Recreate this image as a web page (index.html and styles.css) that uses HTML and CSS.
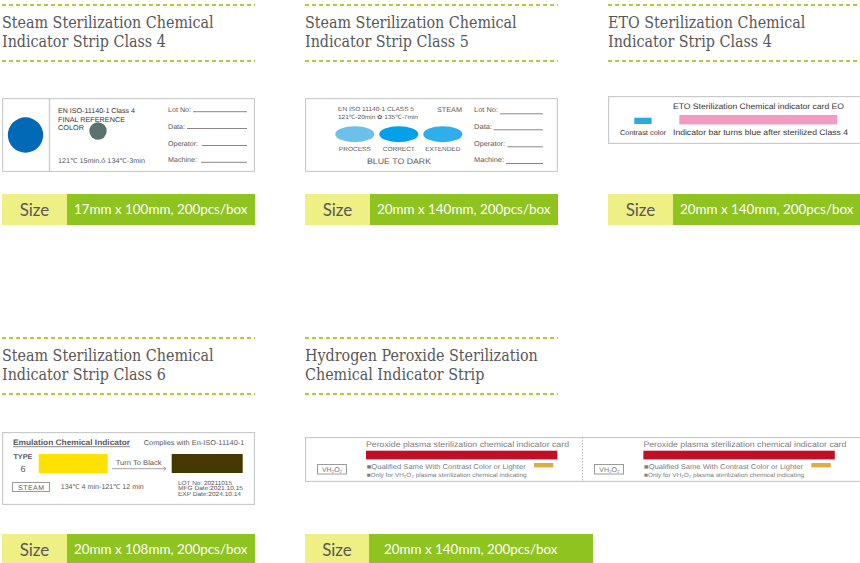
FILE: index.html
```html
<!DOCTYPE html>
<html lang="en">
<head>
<meta charset="utf-8">
<title>Chemical Indicator Strips</title>
<link rel="stylesheet" href="styles.css">
</head>
<body>
<main class="grid">

<article class="card card-top">
  <h2 class="head">Steam Sterilization Chemical<br>Indicator Strip Class 4</h2>
  <div class="figure">
    <svg class="label" width="253" height="74" viewBox="0 0 253 74">
      <rect class="frame" x="0.5" y="0.5" width="252" height="73"/>
      <line class="frame" x1="47.5" y1="0.5" x2="47.5" y2="73.5"/>
      <circle class="c-blue" cx="23.5" cy="37" r="17.7"/>
      <circle class="c-slate" cx="96" cy="33" r="8.7"/>
      <text class="t7 ink" x="56" y="14.5" textLength="77" lengthAdjust="spacingAndGlyphs">EN ISO-11140-1 Class 4</text>
      <text class="t7 ink" x="56" y="23.7" textLength="67" lengthAdjust="spacingAndGlyphs">FINAL REFERENCE</text>
      <text class="t7 ink" x="56" y="32.3" textLength="26" lengthAdjust="spacingAndGlyphs">COLOR</text>
      <text class="t7 mid" x="56" y="65.3" textLength="87" lengthAdjust="spacingAndGlyphs">121℃ 15min.ó 134℃-3min</text>
      <text class="t7 mid" x="166" y="13.7" textLength="23" lengthAdjust="spacingAndGlyphs">Lot No:</text>
      <text class="t7 mid" x="166" y="30.7" textLength="17" lengthAdjust="spacingAndGlyphs">Data:</text>
      <text class="t7 mid" x="166" y="47.7" textLength="30" lengthAdjust="spacingAndGlyphs">Operator:</text>
      <text class="t7 mid" x="166" y="64.3" textLength="29" lengthAdjust="spacingAndGlyphs">Machine:</text>
      <line class="rule" x1="191" y1="13.7" x2="245" y2="13.7"/>
      <line class="rule" x1="185" y1="30.5" x2="245" y2="30.5"/>
      <line class="rule" x1="200" y1="47.5" x2="245" y2="47.5"/>
      <line class="rule" x1="199" y1="64.3" x2="245" y2="64.3"/>
    </svg>
  </div>
  <div class="size"><span class="size-key">Size</span><span class="size-val">17mm x 100mm, 200pcs/box</span></div>
</article>

<article class="card card-top">
  <h2 class="head">Steam Sterilization Chemical<br>Indicator Strip Class 5</h2>
  <div class="figure">
    <svg class="label" width="253" height="74" viewBox="0 0 253 74">
      <rect class="frame" x="0.5" y="0.5" width="252" height="73"/>
      <text class="t6 mid" x="33" y="13.2" textLength="76" lengthAdjust="spacingAndGlyphs">EN ISO  11140-1 CLASS 5</text>
      <text class="t6 mid" x="33" y="20.8" textLength="80" lengthAdjust="spacingAndGlyphs">121℃-20min ✿ 135℃-7min</text>
      <text class="t7 mid" x="132" y="14.2" textLength="25" lengthAdjust="spacingAndGlyphs">STEAM</text>
      <ellipse class="e1" cx="49.8" cy="36.2" rx="19.5" ry="8"/>
      <ellipse class="e2" cx="93.8" cy="36.2" rx="19.5" ry="8"/>
      <ellipse class="e3" cx="137.8" cy="36.2" rx="19.5" ry="8"/>
      <text class="t6 mid mid-a" x="49.8" y="53.2" textLength="32" lengthAdjust="spacingAndGlyphs">PROCESS</text>
      <text class="t6 mid mid-a" x="93.8" y="53.2" textLength="32" lengthAdjust="spacingAndGlyphs">CORRECT</text>
      <text class="t6 mid mid-a" x="137.8" y="53.2" textLength="35" lengthAdjust="spacingAndGlyphs">EXTENDED</text>
      <text class="t8 mid mid-a" x="94" y="66.2" textLength="64" lengthAdjust="spacingAndGlyphs">BLUE TO DARK</text>
      <text class="t7 mid" x="169" y="14.2" textLength="24" lengthAdjust="spacingAndGlyphs">Lot No:</text>
      <text class="t7 mid" x="169" y="31.2" textLength="18" lengthAdjust="spacingAndGlyphs">Data:</text>
      <text class="t7 mid" x="169" y="47.8" textLength="31" lengthAdjust="spacingAndGlyphs">Operator:</text>
      <text class="t7 mid" x="169" y="64.2" textLength="30" lengthAdjust="spacingAndGlyphs">Machine:</text>
      <line class="rule" x1="195" y1="15.8" x2="238" y2="15.8"/>
      <line class="rule" x1="188.5" y1="31.8" x2="238" y2="31.8"/>
      <line class="rule" x1="202.5" y1="48.8" x2="238" y2="48.8"/>
      <line class="rule" x1="201" y1="65.5" x2="238" y2="65.5"/>
    </svg>
  </div>
  <div class="size"><span class="size-key">Size</span><span class="size-val">20mm x 140mm, 200pcs/box</span></div>
</article>

<article class="card card-top">
  <h2 class="head">ETO Sterilization Chemical<br>Indicator Strip Class 4</h2>
  <div class="figure figure-eto">
    <svg class="label" width="252" height="48" viewBox="0 0 252 48">
      <rect class="frame" x="0.5" y="0.5" width="252" height="47"/>
      <text class="t8 ink" x="65" y="12.7" textLength="171" lengthAdjust="spacingAndGlyphs">ETO Sterilization Chemical indicator card EO</text>
      <rect class="c-pink" x="71.3" y="19" width="158" height="9.4"/>
      <rect class="c-cyan" x="26.3" y="21.7" width="17.3" height="6.3"/>
      <text class="t7 ink" x="12" y="38.7" textLength="46" lengthAdjust="spacingAndGlyphs">Contrast color</text>
      <text class="t8 ink" x="65" y="38.7" textLength="175" lengthAdjust="spacingAndGlyphs">Indicator bar turns blue after sterilized Class 4</text>
    </svg>
  </div>
  <div class="size"><span class="size-key">Size</span><span class="size-val">20mm x 140mm, 200pcs/box</span></div>
</article>

<article class="card card-low">
  <h2 class="head">Steam Sterilization Chemical<br>Indicator Strip Class 6</h2>
  <div class="figure">
    <svg class="label" width="253" height="73" viewBox="0 0 253 73">
      <rect class="frame" x="0.5" y="0.5" width="252" height="72"/>
      <text class="t8 mid strong" x="11" y="12.7" textLength="117" lengthAdjust="spacingAndGlyphs">Emulation Chemical Indicator</text>
      <line class="rule" x1="11" y1="14.7" x2="128" y2="14.7"/>
      <text class="t7 mid" x="141.7" y="12.7" textLength="100.7" lengthAdjust="spacingAndGlyphs">Complies with En-ISO-11140-1</text>
      <text class="t7 mid strong" x="11.4" y="27" textLength="19" lengthAdjust="spacingAndGlyphs">TYPE</text>
      <text class="t9 mid" x="18.4" y="39.7">6</text>
      <rect class="c-yellow" x="36.7" y="22" width="69" height="19"/>
      <rect class="c-umber" x="169.7" y="22" width="71" height="19"/>
      <text class="t7 mid" x="113.7" y="33" textLength="46" lengthAdjust="spacingAndGlyphs">Turn To Black</text>
      <path class="arrow" d="M110 36.7H164M161.5 34.7l2.5 2-2.5 2"/>
      <rect class="box" x="10.5" y="50.5" width="37" height="9"/>
      <text class="t7 mid mid-a" x="29" y="57.5" textLength="26">STEAM</text>
      <text class="t7 mid" x="58.7" y="57.3" textLength="83" lengthAdjust="spacingAndGlyphs">134℃ 4 min-121℃ 12 min</text>
      <text class="t6 mid" x="176" y="52.7" textLength="54" lengthAdjust="spacingAndGlyphs">LOT No: 20211015</text>
      <text class="t6 mid" x="176" y="58.4" textLength="65" lengthAdjust="spacingAndGlyphs">MFG Date:2021.10.15</text>
      <text class="t6 mid" x="176" y="64.4" textLength="63" lengthAdjust="spacingAndGlyphs">EXP Date:2024.10.14</text>
    </svg>
  </div>
  <div class="size"><span class="size-key">Size</span><span class="size-val">20mm x 108mm, 200pcs/box</span></div>
</article>

<article class="card card-low">
  <h2 class="head">Hydrogen Peroxide Sterilization<br>Chemical Indicator Strip</h2>
  <div class="figure figure-wide">
    <svg class="label" width="556" height="45" viewBox="0 0 556 45">
      <rect class="frame" x="0.5" y="0.5" width="570" height="44"/>
      <line class="dots" x1="277.5" y1="0" x2="277.5" y2="45"/>
      <rect class="box" x="12.5" y="27.5" width="29" height="9.5"/>
      <text class="t7 soft mid-a" x="27" y="34.9">VH<tspan class="sub" dy="1">2</tspan><tspan dy="-1">O</tspan><tspan class="sub" dy="1">2</tspan></text>
      <text class="t8 soft" x="61" y="10" textLength="203" lengthAdjust="spacingAndGlyphs">Peroxide plasma sterilization chemical indicator card</text>
      <rect class="c-red" x="61" y="13.7" width="191.4" height="8.7"/>
      <rect class="c-gold" x="229" y="26" width="19.4" height="4.4"/>
      <text class="t7 soft" x="61.7" y="32.4" textLength="159" lengthAdjust="spacingAndGlyphs">■Qualified Same With Contrast Color or Lighter</text>
      <text class="t6 soft" x="61.7" y="40" textLength="160" lengthAdjust="spacingAndGlyphs">■Only for VH₂O₂ plasma sterilization chemical indicating</text>
      <rect class="box" x="289.5" y="27.5" width="29" height="9.5"/>
      <text class="t7 soft mid-a" x="304.4" y="34.9">VH<tspan class="sub" dy="1">2</tspan><tspan dy="-1">O</tspan><tspan class="sub" dy="1">2</tspan></text>
      <text class="t8 soft" x="338.4" y="10" textLength="203" lengthAdjust="spacingAndGlyphs">Peroxide plasma sterilization chemical indicator card</text>
      <rect class="c-red" x="338.4" y="13.7" width="191.4" height="8.7"/>
      <rect class="c-gold" x="506.4" y="26" width="19.4" height="4.4"/>
      <text class="t7 soft" x="339.1" y="32.4" textLength="159" lengthAdjust="spacingAndGlyphs">■Qualified Same With Contrast Color or Lighter</text>
      <text class="t6 soft" x="339.1" y="40" textLength="160" lengthAdjust="spacingAndGlyphs">■Only for VH₂O₂ plasma sterilization chemical indicating</text>
    </svg>
  </div>
  <div class="size size-wide"><span class="size-key">Size</span><span class="size-val">20mm x 140mm, 200pcs/box</span></div>
</article>

</main>
</body>
</html>
```
FILE: styles.css
```css
html, body {
  margin: 0;
  height: 563px;
  overflow: hidden;
  background: #fff;
}
.grid {
  display: grid;
  grid-template-columns: 253px 253px 252px;
  column-gap: 50px;
  row-gap: 112px;
  padding: 4px 0 0 2px;
  align-items: start;
}
.card { min-width: 0; }

.head {
  box-sizing: border-box;
  height: 58px;
  margin: 0;
  padding: 9px 0 0;
  font: 400 15.9px/19.4px "DejaVu Serif", serif;
  font-stretch: condensed;
  color: #595757;
  white-space: nowrap;
  background-image:
    repeating-linear-gradient(90deg, #a4d03c 0 4px, transparent 4px 7px),
    repeating-linear-gradient(90deg, #a4d03c 0 4px, transparent 4px 7px);
  background-size: 100% 2px;
  background-position: left top, left bottom;
  background-repeat: no-repeat;
}

.card-top .figure { height: 132px; padding-top: 36px; box-sizing: border-box; }
.card-top .figure-eto { padding-top: 34px; }
.card-low .figure { height: 139px; padding-top: 37px; box-sizing: border-box; }
.card-low .figure-wide { padding-top: 42px; }
.label { display: block; overflow: hidden; opacity: 0.99; }

.frame { fill: none; stroke: #c9caca; stroke-width: 1.3; }
.rule { stroke: #8a8587; stroke-width: 1; }
.box { fill: none; stroke: #9a9a9a; stroke-width: 1; }
.dots { stroke: #b5b5b5; stroke-width: 1; stroke-dasharray: 1.5 1.5; }
.arrow { fill: none; stroke: #8a8a8a; stroke-width: 0.8; }

.label text {
  font-family: "Liberation Sans", Arial, sans-serif;
  text-rendering: geometricPrecision;
}
.t6 { font-size: 6px; }
.t7 { font-size: 7px; }
.t8 { font-size: 8px; }
.t9 { font-size: 9px; }
.sub { font-size: 4.5px; }
.ink { fill: #333; }
.mid { fill: #595757; }
.soft { fill: #7d7d7d; }
.strong { font-weight: 700; }
.mid-a { text-anchor: middle; }

.c-blue { fill: #0068b7; }
.c-slate { fill: #5a716d; }
.e1 { fill: #6cc0ea; }
.e2 { fill: #00a0e9; }
.e3 { fill: #2caeea; }
.c-pink { fill: #f39ac2; }
.c-cyan { fill: #29a9e0; }
.c-yellow { fill: #ffe100; }
.c-umber { fill: #453600; }
.c-red { fill: #c30d23; }
.c-gold { fill: #dcae3e; }

.size {
  display: flex;
  height: 31px;
  font-family: Lato, sans-serif;
  line-height: 31px;
  white-space: nowrap;
}
.size-key {
  flex: 0 0 65px;
  text-align: center;
  font-size: 17px;
  color: #595757;
  background: #eef086;
}
.size-val {
  flex: 1;
  padding-left: 7px;
  font-size: 13.4px;
  color: #fff;
  background: #8fc31f;
}
.size-wide { width: 288px; }
.size-wide .size-key { flex-basis: 64px; }
.size-wide .size-val { padding-left: 15px; }
```
